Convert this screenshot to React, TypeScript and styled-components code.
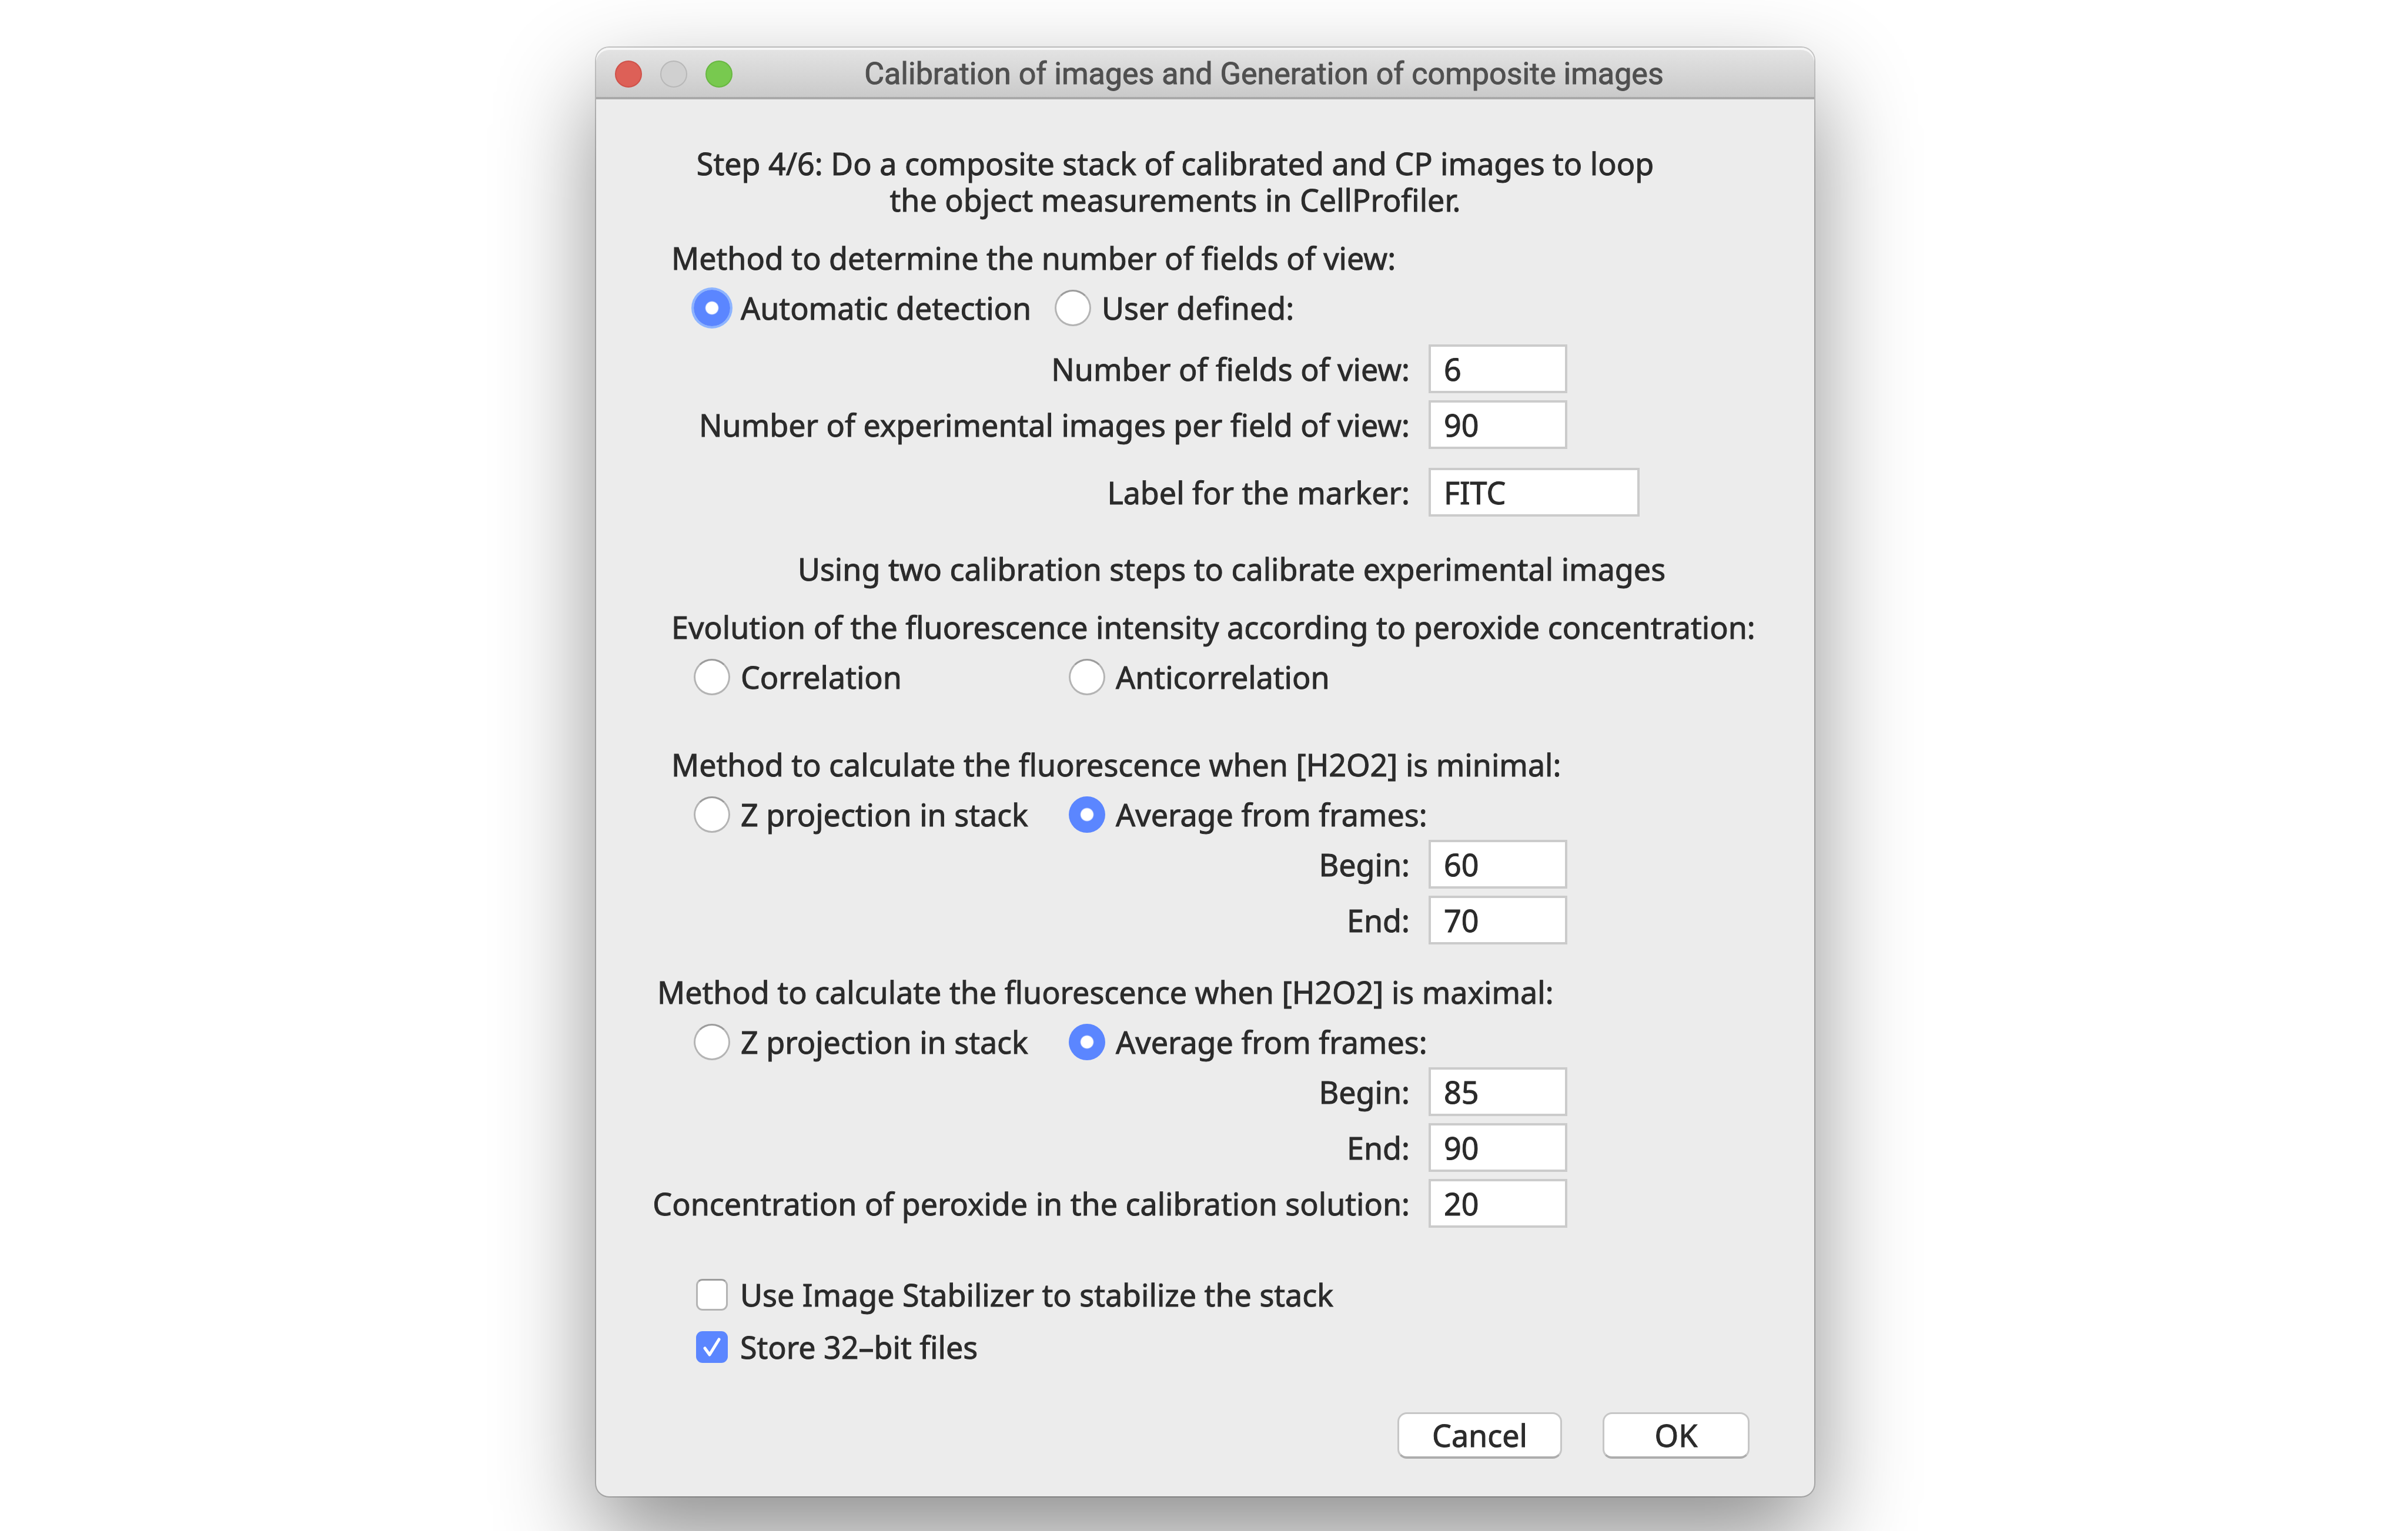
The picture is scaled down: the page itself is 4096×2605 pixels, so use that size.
import React, { useId, useState } from 'react';
import styled, { createGlobalStyle } from 'styled-components';

const BLUE = '#5b86ff';

const GlobalStyle = createGlobalStyle`
  *, *::before, *::after { box-sizing: border-box; }
  body {
    margin: 0;
    background: #fff;
    color: #2b2b2b;
    font-family: "Noto Sans", "Lucida Grande", sans-serif;
    font-size: 52px;
    line-height: 62px;
    -webkit-text-stroke: 1px currentColor;
  }
`;

const Desktop = styled.main`
  display: flex;
  justify-content: center;
  align-items: flex-start;
  min-height: 100vh;
  padding: 81px 0 48px 4px;
  overflow: hidden;
`;

const Dialog = styled.form`
  width: 2072px;
  max-width: 100%;
  border-radius: 22px;
  background: #ececec;
  box-shadow: 0 0 0 2px rgba(0, 0, 0, 0.2), 0 72px 168px rgba(0, 0, 0, 0.45);
`;

const TitleBar = styled.header`
  display: flex;
  align-items: center;
  height: 88px;
  padding: 6px 32px 0;
  border-bottom: 4px solid #a9a9a9;
  border-radius: 22px 22px 0 0;
  background: linear-gradient(#e4e4e4, #cacaca);
  box-shadow: inset 0 4px 0 #f6f6f6;
`;

const Lights = styled.div`
  display: flex;
  gap: 31px;
`;

const Light = styled.button<{ $fill: string; $edge: string }>`
  width: 46px;
  height: 46px;
  padding: 0;
  border: 2px solid ${p => p.$edge};
  border-radius: 50%;
  background: ${p => p.$fill};
`;

const Title = styled.h1`
  flex: 1;
  margin: 0;
  color: #505050;
  font-family: Roboto, "Liberation Sans", sans-serif;
  font-size: 52px;
  font-weight: 400;
  text-align: center;
`;

const Body = styled.div`
  display: flex;
  flex-direction: column;
  padding: 78px 110px 64px 94px;
`;

const Intro = styled.p`
  margin: 0;
  padding-right: 86px;
  text-align: center;
`;

const Note = styled.p`
  margin: 58px 0 0;
  padding-left: 106px;
  text-align: center;
`;

const Section = styled.section<{ $space: number }>`
  display: flex;
  flex-direction: column;
  margin-top: ${p => p.$space}px;
`;

const Heading = styled.h2<{ $indent?: number }>`
  margin: 0 0 23px ${p => p.$indent ?? 34}px;
  font-size: 52px;
  font-weight: 400;
  white-space: nowrap;
`;

const Choices = styled.div<{ $first: number }>`
  display: grid;
  grid-template-columns: ${p => p.$first}px 1fr;
  margin-left: 72px;
`;

const Choice = styled.label`
  display: flex;
  align-items: center;
  gap: 18px;
  white-space: nowrap;
`;

const Radio = styled.input`
  appearance: none;
  flex: none;
  width: 62px;
  height: 62px;
  margin: 0;
  border: 3px solid #b4b4b4;
  border-top-color: #9c9c9c;
  border-radius: 50%;
  background: #fff;
  outline: none;

  &:checked {
    border: 0;
    background: radial-gradient(circle, #fff 10px, ${BLUE} 12px);
  }
  &[data-ring='true']:checked {
    box-shadow: 0 0 0 4px #8db4ff;
  }
`;

const Fields = styled.div<{ $space: number }>`
  display: flex;
  flex-direction: column;
  gap: 12px;
  margin-top: ${p => p.$space}px;
`;

const FieldRow = styled.div`
  display: grid;
  grid-template-columns: 1290px auto;
  column-gap: 32px;
  align-items: center;
  justify-content: start;
`;

const FieldLabel = styled.label`
  display: flex;
  justify-content: flex-end;
  white-space: nowrap;
`;

const TextBox = styled.input<{ $wide?: boolean }>`
  width: ${p => (p.$wide ? 359 : 236)}px;
  height: 83px;
  padding: 0 0 0 22px;
  border: 4px solid #cbcbcb;
  border-radius: 0;
  background: #fff;
  color: inherit;
  font: inherit;
  outline: none;
`;

const Ticks = styled.div`
  display: flex;
  flex-direction: column;
  gap: 27px;
  margin: 83px 0 0 76px;
`;

const TickLabel = styled(Choice)`
  gap: 21px;
`;

const TickFrame = styled.span`
  position: relative;
  display: flex;
`;

const TickBox = styled.input`
  appearance: none;
  width: 54px;
  height: 54px;
  margin: 0;
  border: 3px solid #b4b4b4;
  border-top-color: #9c9c9c;
  border-radius: 11px;
  background: #fff;

  &:checked {
    border: 0;
    background: ${BLUE};
  }
`;

const TickMark = styled.svg`
  position: absolute;
  inset: 0;
  width: 54px;
  height: 54px;
  pointer-events: none;
`;

const Actions = styled.footer`
  display: flex;
  justify-content: flex-end;
  gap: 69px;
  margin-top: 80px;
`;

const ActionButton = styled.button<{ $wide?: boolean }>`
  width: ${p => (p.$wide ? 280 : 250)}px;
  height: 79px;
  padding: 0;
  border: 3px solid #c6c6c6;
  border-bottom: 4px solid #adadad;
  border-radius: 16px;
  background: #fff;
  color: inherit;
  font: inherit;
  line-height: 62px;
`;

function Field({ label, initial, wide }: { label: string; initial: string; wide?: boolean }) {
  const id = useId();
  const [value, setValue] = useState(initial);
  return (
    <FieldRow>
      <FieldLabel htmlFor={id}>{label}</FieldLabel>
      <TextBox id={id} type="text" $wide={wide} value={value} onChange={e => setValue(e.target.value)} />
    </FieldRow>
  );
}

type RadioGroupProps = {
  heading: string;
  options: [string, string];
  selected?: number;
  ring?: boolean;
  first?: number;
  indent?: number;
};

function RadioGroup({ heading, options, selected, ring, first = 638, indent }: RadioGroupProps) {
  const id = useId();
  const [current, setCurrent] = useState(selected);
  return (
    <>
      <Heading id={id} $indent={indent}>{heading}</Heading>
      <Choices $first={first} role="radiogroup" aria-labelledby={id}>
        {options.map((option, i) => (
          <Choice key={option}>
            <Radio
              type="radio"
              name={id}
              data-ring={ring}
              checked={current === i}
              onChange={() => setCurrent(i)}
            />
            {option}
          </Choice>
        ))}
      </Choices>
    </>
  );
}

function Tick({ label, initial }: { label: string; initial: boolean }) {
  const [on, setOn] = useState(initial);
  return (
    <TickLabel>
      <TickFrame>
        <TickBox type="checkbox" checked={on} onChange={() => setOn(!on)} />
        {on && (
          <TickMark viewBox="0 0 54 54" fill="none" stroke="#fff" strokeWidth="5" strokeLinecap="round" strokeLinejoin="round" aria-hidden="true">
            <path d="M15 29 L23 40 L39 14" />
          </TickMark>
        )}
      </TickFrame>
      {label}
    </TickLabel>
  );
}

export default function App() {
  return (
    <>
      <GlobalStyle />
      <Desktop>
        <Dialog onSubmit={e => e.preventDefault()}>
          <TitleBar>
            <Lights>
              <Light type="button" aria-label="Close" $fill="#dd6057" $edge="#cf5149" />
              <Light type="button" aria-label="Minimize" $fill="#d0d0d0" $edge="#b8b8b8" />
              <Light type="button" aria-label="Zoom" $fill="#78c94f" $edge="#68b741" />
            </Lights>
            <Title>Calibration of images and Generation of composite images</Title>
          </TitleBar>
          <Body>
            <Intro>
              Step 4/6: Do a composite stack of calibrated and CP images to loop
              <br />
              the object measurements in CellProfiler.
            </Intro>

            <Section $space={37}>
              <RadioGroup
                heading="Method to determine the number of fields of view:"
                options={['Automatic detection', 'User defined:']}
                selected={0}
                ring
                first={614}
              />
              <Fields $space={31}>
                <Field label="Number of fields of view:" initial="6" />
                <Field label="Number of experimental images per field of view:" initial="90" />
              </Fields>
              <Fields $space={32}>
                <Field label="Label for the marker:" initial="FITC" wide />
              </Fields>
            </Section>

            <Note>Using two calibration steps to calibrate experimental images</Note>

            <Section $space={37}>
              <RadioGroup
                heading="Evolution of the fluorescence intensity according to peroxide concentration:"
                options={['Correlation', 'Anticorrelation']}
              />
            </Section>

            <Section $space={87}>
              <RadioGroup
                heading="Method to calculate the fluorescence when [H2O2] is minimal:"
                options={['Z projection in stack', 'Average from frames:']}
                selected={1}
              />
              <Fields $space={12}>
                <Field label="Begin:" initial="60" />
                <Field label="End:" initial="70" />
              </Fields>
            </Section>

            <Section $space={50}>
              <RadioGroup
                heading="Method to calculate the fluorescence when [H2O2] is maximal:"
                options={['Z projection in stack', 'Average from frames:']}
                selected={1}
                indent={10}
              />
              <Fields $space={12}>
                <Field label="Begin:" initial="85" />
                <Field label="End:" initial="90" />
                <Field label="Concentration of peroxide in the calibration solution:" initial="20" />
              </Fields>
            </Section>

            <Ticks>
              <Tick label="Use Image Stabilizer to stabilize the stack" initial={false} />
              <Tick label="Store 32–bit files" initial />
            </Ticks>

            <Actions>
              <ActionButton type="button" $wide>Cancel</ActionButton>
              <ActionButton type="submit">OK</ActionButton>
            </Actions>
          </Body>
        </Dialog>
      </Desktop>
    </>
  );
}
